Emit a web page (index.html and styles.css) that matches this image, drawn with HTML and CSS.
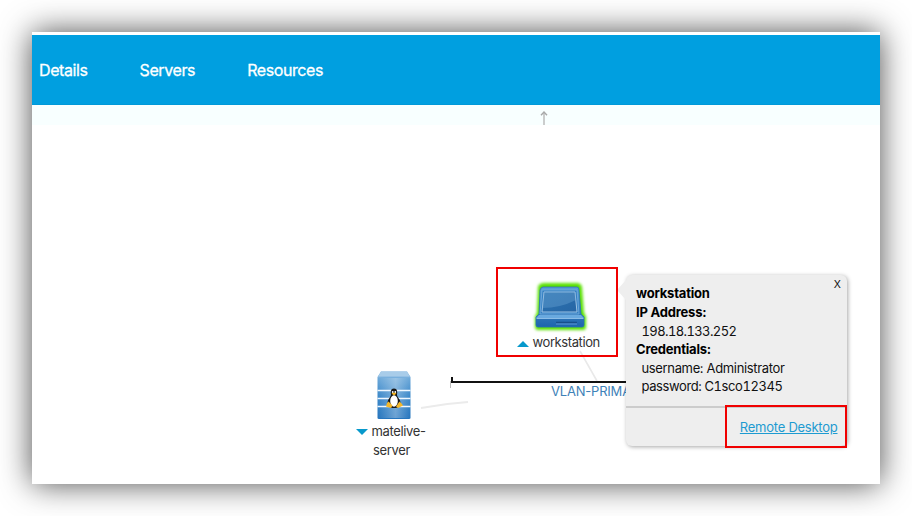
FILE: index.html
```html
<!DOCTYPE html>
<html lang="en">
<head>
<meta charset="utf-8">
<title>Topology</title>
<link rel="stylesheet" href="styles.css">
</head>
<body>
<main class="window">
  <nav class="nav"><a>Details</a><a>Servers</a><a>Resources</a></nav>
  <div class="strip">
    <svg class="up" width="8" height="14" viewBox="0 0 8 14"><path d="M4 1V14" stroke="#bcbcbc" stroke-width="1.5"/><path d="M1 4.2L4 1L7 4.2" fill="none" stroke="#a8a8a8" stroke-width="1.4"/></svg>
  </div>
  <section class="canvas">
    <svg class="links" width="848" height="359" viewBox="32 125 848 359">
      <path d="M421 408Q445 403.500 468 402" fill="none" stroke="#ebebeb" stroke-width="1.800"/>
      <path d="M580 351L597 381" stroke="#e9e9e9" stroke-width="1.600"/>
      <path d="M450.500 381V388" stroke="#bbb"/>
      <path d="M452 377V382H630" fill="none" stroke="#111" stroke-width="2"/>
    </svg>
    <span class="vlan">VLAN-PRIMARY</span>

    <div class="node workstation">
      <svg width="70" height="58" viewBox="0 0 70 58">
        <defs>
          <linearGradient id="b" x2="0" y2="1"><stop stop-color="#5b9fd8"/><stop offset="1" stop-color="#1d65ad"/></linearGradient>
          <linearGradient id="s" x2="1" y2="1"><stop stop-color="#2b73b1"/><stop offset="1" stop-color="#2766a5"/></linearGradient>
          <filter id="g" x="-30%" y="-30%" width="160%" height="160%"><feGaussianBlur stdDeviation="1.8"/></filter>
        </defs>
        <path d="M14 8Q15 5 19 5H52Q55 5 56 8L58 34L60 38V48Q60 50 58 50H13Q11 50 11 48V38L13 34Z" fill="#58e000" stroke="#58e000" stroke-width="2" filter="url(#g)"/>
        <path d="M15 11Q16 8 18 8H52Q54 8 54 11L56 35L59 38V46Q59 48 57 48H13Q11 48 11 46V38L14 35Z" fill="url(#b)" stroke="#2a70b2" stroke-width=".8"/>
        <path d="M17 11H52L54 35H15Z" fill="#3580c2" stroke="#76afdf" stroke-width=".8"/>
        <path d="M19 13H50L52 33H17Z" fill="url(#s)" stroke="#9cc2e4"/>
        <path d="M19 13H50.500L51 21Q35 29 17.500 29Z" fill="#6ba5d5" opacity=".4"/>
        <path d="M14 36H56L59 39H11Z" fill="#69a9df"/>
        <path d="M11.500 39.500H58.500" stroke="#8bbce6"/>
        <path d="M31 43.500H52" stroke="#174f8b" stroke-width="1.500"/><path d="M31 45H52" stroke="#5897d3"/>
      </svg>
      <p><i class="tri upward"></i>workstation</p>
    </div>

    <div class="node server">
      <svg width="36" height="50" viewBox="0 0 36 50">
        <defs><linearGradient id="r" x2="0" y2="1"><stop stop-color="#7eb4df"/><stop offset=".5" stop-color="#3e8aca"/><stop offset="1" stop-color="#2675bd"/></linearGradient>
        <linearGradient id="q" x2="1" y2="0"><stop stop-color="#fff" stop-opacity="0"/><stop offset=".55" stop-color="#fff" stop-opacity=".32"/><stop offset="1" stop-color="#fff" stop-opacity="0"/></linearGradient></defs>
        <path d="M5 .5H31L34.500 6V47Q34.500 48 33 48H3Q1.500 48 1.500 47V6Z" fill="url(#r)"/>
        <path d="M5 .5H31L34 6H2Z" fill="#a8cce9"/><path d="M2 6H34" stroke="#82b5df"/>
        <path d="M2 7H34V47H2Z" fill="url(#q)"/>
        <path d="M1.500 19.500H34.500M1.500 27.500H34.500M1.500 35.500H34.500" stroke="#eef7ff" stroke-width="1.400"/>
        <path d="M18 17.500C14.500 17.500 14.500 21 15 24C14 27 11.500 28.500 11.500 32C12 36 14 37 18 37C22 37 24.500 36 24.500 32C24.500 28 21.500 27 21 24C21.500 21 21.500 17.500 18 17.500Z" fill="#161616"/>
        <ellipse cx="18" cy="30" rx="3.800" ry="5.800" fill="#fff"/>
        <circle cx="16.700" cy="21" r=".9" fill="#fff"/><circle cx="19.300" cy="21" r=".9" fill="#fff"/>
        <path d="M15.500 22.500L18 21.500L20.500 22.500L18 24.500Z" fill="#f4b51e"/>
        <path d="M12.500 30.500L16.500 34.500L15 37L10 35.500L11 32Z" fill="#f5b829"/><path d="M23.500 30.500L25.500 32.500L27 34.500L22 37L20 35.500Z" fill="#f5b829"/>
      </svg>
      <p><i class="tri downward"></i>matelive-<br><span class="second">server</span></p>
    </div>

    <aside class="popup">
      <svg class="pointer" width="9" height="20" viewBox="0 0 9 20"><path d="M9 0L0 10L9 20Z" fill="#eee"/></svg>
      <span class="close">X</span>
      <div class="info">
        <b>workstation</b>
        <b>IP Address:</b>
        <span class="ip">198.18.133.252</span>
        <b class="cred">Credentials:</b>
        <span class="user">username: Administrator</span>
        <span class="pass">password: C1sco12345</span>
      </div>
      <footer><a class="remote">Remote Desktop</a></footer>
    </aside>
    <div class="mark mark-node"></div>
    <div class="mark mark-link"></div>
  </section>
</main>
</body>
</html>
```

FILE: styles.css
```css
* { box-sizing: border-box; }
body {
  margin: 0;
  padding: 32px;
  width: 912px;
  height: 516px;
  overflow: hidden;
  background: #fff;
  font-family: Inter, "Liberation Sans", sans-serif;
}
.window {
  width: 848px;
  height: 452px;
  padding-top: 3px;
  background: #fff;
  box-shadow: 0 0 30px rgba(0, 0, 0, .7);
}
.nav {
  display: flex;
  align-items: center;
  gap: 52px;
  height: 70px;
  padding-left: 7px;
  background: #009fe0;
  border-bottom: 1px solid #0099d8;
  color: #fff;
  font-size: 16px;
  letter-spacing: -.4px;
  -webkit-text-stroke: .3px #fff;
}
.strip {
  height: 20px;
  padding: 6px 0 0 508px;
  background: #f8ffff;
}
.up { display: block; }
.canvas { position: relative; height: 359px; overflow: hidden; }
.links { display: block; }
.vlan {
  position: absolute;
  left: 519px;
  top: 257px;
  color: #3f82b8;
  font-size: 13px;
  line-height: 19px;
  letter-spacing: -.2px;
}
.node { position: absolute; color: #333; font-size: 13px; line-height: 19px; white-space: nowrap; }
.node svg { display: block; }
.node p { margin: 0; }
.workstation { left: 485px; top: 154px; }
.workstation svg { margin-left: 8px; }
.workstation p { margin-top: -4px; letter-spacing: -.4px; }
.server { left: 324px; top: 246px; }
.server svg { margin-left: 19.5px; }
.server p { margin-top: 1px; letter-spacing: -.35px; }
.second { margin-left: 17px; }
.tri { display: inline-block; margin-right: 3.500px; border: 6px solid transparent; }
.upward { border-top: 0; border-bottom-color: #0799cc; }
.downward { border-bottom: 0; border-top-color: #0799cc; margin-bottom: 1px; }
.popup {
  position: absolute;
  left: 594px;
  top: 150px;
  width: 221px;
  height: 171px;
  border-radius: 6px;
  background: #eee;
  box-shadow: 1px 1px 4px rgba(0, 0, 0, .35);
  color: #111;
  font-size: 13px;
  line-height: 18.6px;
}
.pointer { position: absolute; left: -9px; top: 5px; }
.close { position: absolute; right: 6px; top: 1px; font-size: 10.5px; }
.info {
  display: flex;
  flex-direction: column;
  height: 133px;
  padding: 9.400px 0 0 10px;
  border-bottom: 2px solid #ccc;
  white-space: nowrap;
}
.info b { color: #000; font-weight: 700; letter-spacing: -.2px; }
.info span { margin-left: 5.500px; }
.info .ip { font-variant-numeric: tabular-nums; letter-spacing: -.6px; }
.info .user { letter-spacing: -.35px; }
.info .pass { font-variant-numeric: tabular-nums; letter-spacing: -.4px; }
.remote { color: #1d9bd1; text-decoration: underline; letter-spacing: -.25px; }
footer { padding: 10px 9.5px 0 0; text-align: right; }
.mark { position: absolute; border: 2px solid #f00000; }
.mark-node { left: 464px; top: 142px; width: 122px; height: 90px; }
.mark-link { left: 693px; top: 280px; width: 122px; height: 43px; }
```
